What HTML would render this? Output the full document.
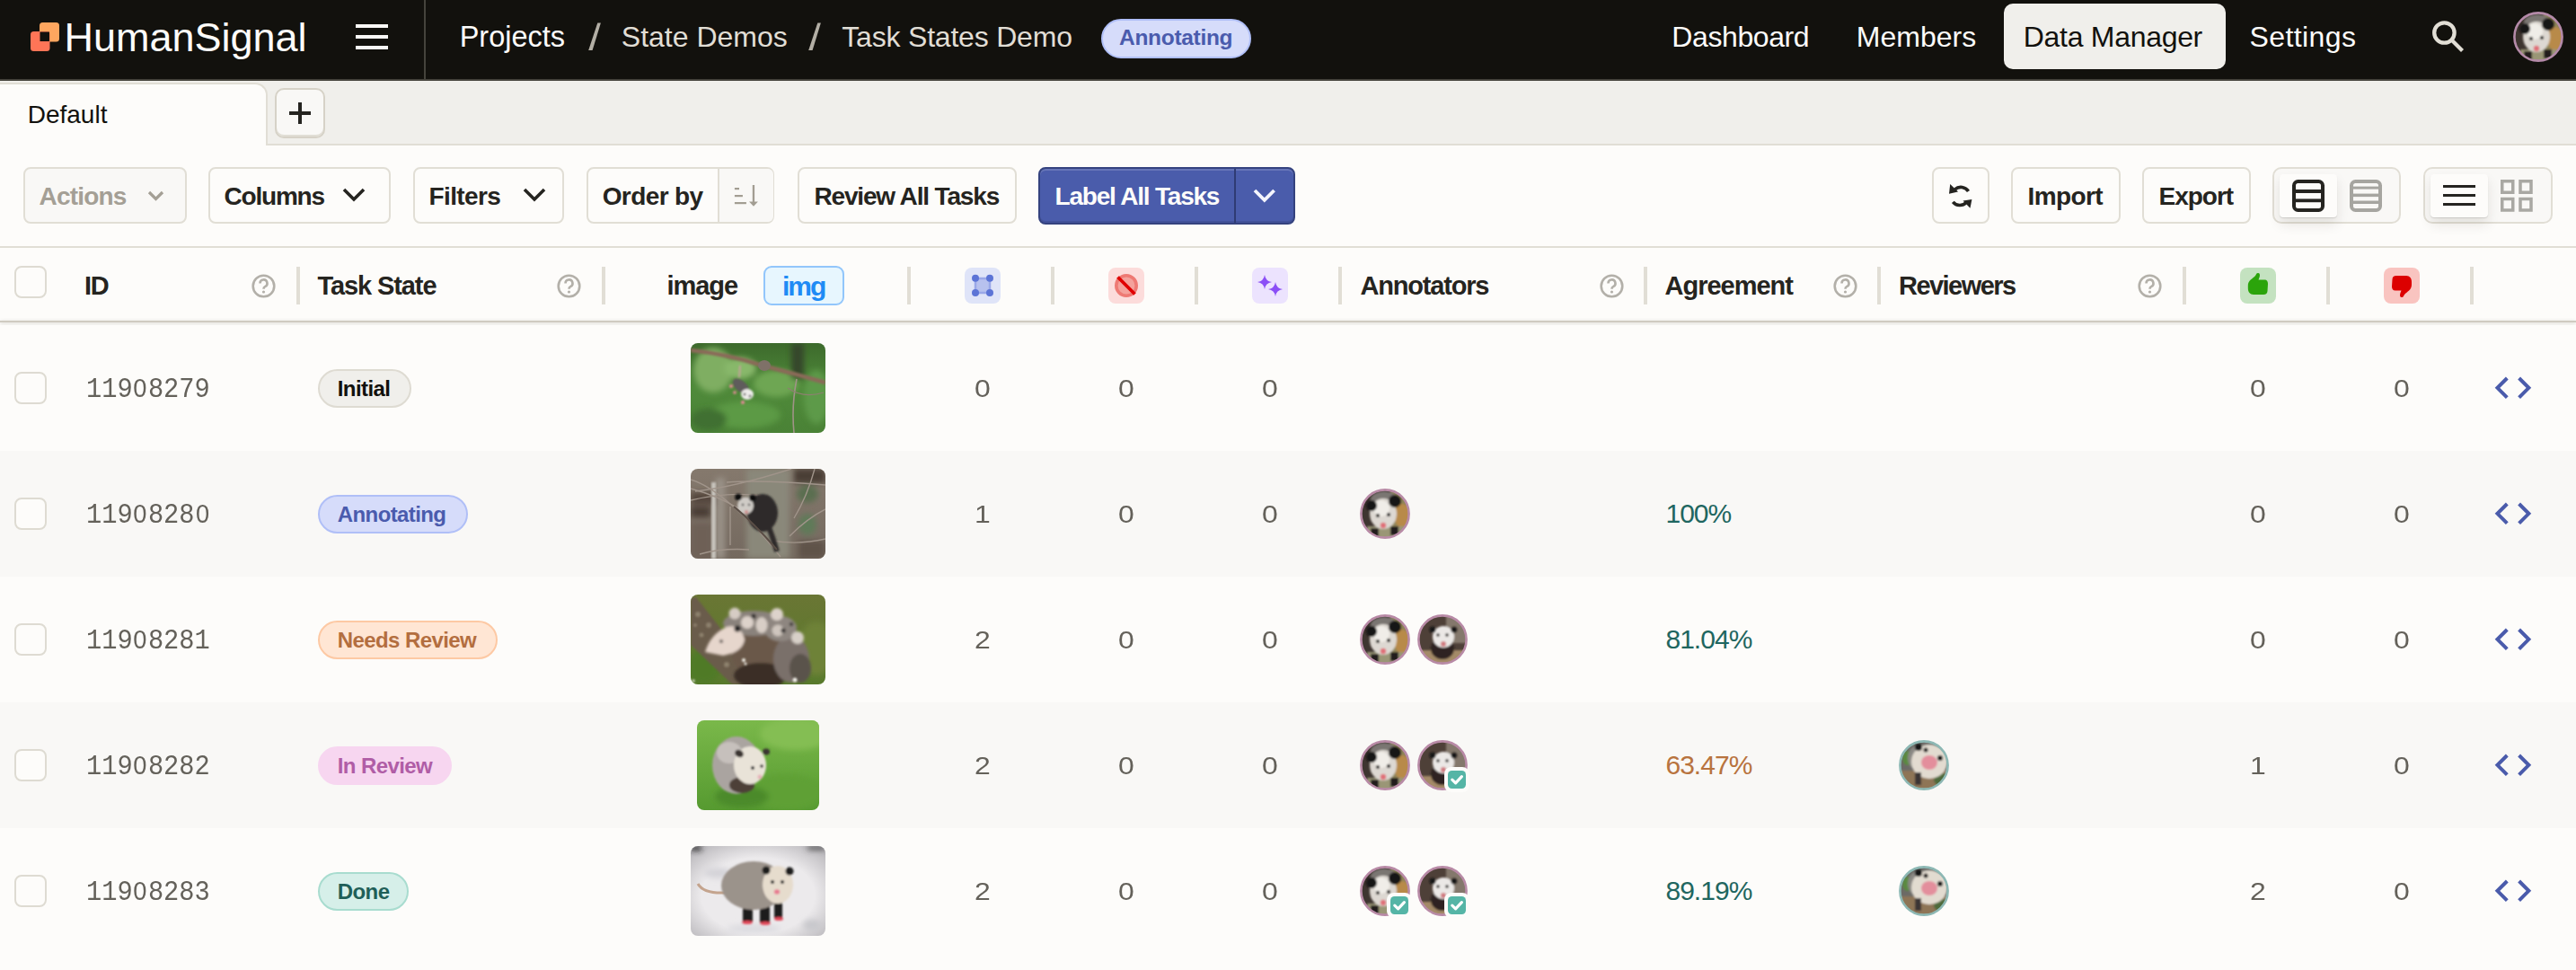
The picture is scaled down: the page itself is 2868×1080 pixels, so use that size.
<!DOCTYPE html>
<html><head><meta charset="utf-8"><title>Data Manager</title>
<style>html,body{margin:0;padding:0;width:2868px;height:1080px;overflow:hidden;background:#fdfcfa;position:relative}
*{font-family:"Liberation Sans", sans-serif}</style></head>
<body>
<div style="position:absolute;left:0px;top:0px;width:2868px;height:88px;background:#12110d"></div>
<div style="position:absolute;left:0px;top:88px;width:2868px;height:2px;background:#45433c"></div>
<svg style="position:absolute;left:33px;top:24px;" width="34" height="34" viewBox="0 0 34 34"><rect x="11" y="1" width="22" height="21.5" rx="3.5" fill="#fea65f"/><rect x="1" y="11" width="21.5" height="22" rx="3.5" fill="#ff7557"/><rect x="11.5" y="11.5" width="10.5" height="10.5" fill="#12110d"/></svg>
<div style="position:absolute;left:71.4px;top:18.8px;font-family:'Liberation Sans', sans-serif;font-size:45px;line-height:45px;font-weight:400;color:#fdfcfa;letter-spacing:0px;white-space:nowrap;">HumanSignal</div>
<div style="position:absolute;left:396px;top:27px;width:36px;height:4px;background:#f9f8f6"></div>
<div style="position:absolute;left:396px;top:39px;width:36px;height:4px;background:#f9f8f6"></div>
<div style="position:absolute;left:396px;top:51px;width:36px;height:4px;background:#f9f8f6"></div>
<div style="position:absolute;left:472px;top:0px;width:2px;height:88px;background:#45433c"></div>
<div style="position:absolute;left:511.7px;top:24.9px;font-family:'Liberation Sans', sans-serif;font-size:32.5px;line-height:32.5px;font-weight:400;color:#fdfcfa;letter-spacing:0px;white-space:nowrap;">Projects</div>
<svg style="position:absolute;left:650px;top:20px;" width="25" height="42" viewBox="0 0 25 42"><polygon points="15.3,5.6 18.9,5.6 9.6,36 5.2,36" fill="#b3afa5"/></svg>
<div style="position:absolute;left:691.8px;top:25.3px;font-family:'Liberation Sans', sans-serif;font-size:32px;line-height:32px;font-weight:400;color:#e1ded5;letter-spacing:0px;white-space:nowrap;">State Demos</div>
<svg style="position:absolute;left:895px;top:20px;" width="25" height="42" viewBox="0 0 25 42"><polygon points="15.3,5.6 18.9,5.6 9.6,36 5.2,36" fill="#b3afa5"/></svg>
<div style="position:absolute;left:937.3px;top:25.3px;font-family:'Liberation Sans', sans-serif;font-size:32px;line-height:32px;font-weight:400;color:#e1ded5;letter-spacing:-0.2px;white-space:nowrap;">Task States Demo</div>
<div style="position:absolute;left:1226px;top:21px;width:167px;height:44px;background:#d6dcfa;border:2px solid #b0bff7;border-radius:22px;box-sizing:border-box"></div>
<div style="position:absolute;left:1246.0px;top:30.2px;font-family:'Liberation Sans', sans-serif;font-size:24.5px;line-height:24.5px;font-weight:700;color:#4a5bad;letter-spacing:-0.3px;white-space:nowrap;">Annotating</div>
<div style="position:absolute;left:1861.3px;top:25.3px;font-family:'Liberation Sans', sans-serif;font-size:32px;line-height:32px;font-weight:400;color:#fdfcfa;letter-spacing:-0.4px;white-space:nowrap;">Dashboard</div>
<div style="position:absolute;left:2066.8px;top:25.3px;font-family:'Liberation Sans', sans-serif;font-size:32px;line-height:32px;font-weight:400;color:#fdfcfa;letter-spacing:0px;white-space:nowrap;">Members</div>
<div style="position:absolute;left:2231px;top:4px;width:247px;height:73px;background:#f0efeb;border-radius:10px"></div>
<div style="position:absolute;left:2252.8px;top:25.3px;font-family:'Liberation Sans', sans-serif;font-size:32px;line-height:32px;font-weight:400;color:#12110d;letter-spacing:-0.3px;white-space:nowrap;">Data Manager</div>
<div style="position:absolute;left:2504.5px;top:25.3px;font-family:'Liberation Sans', sans-serif;font-size:32px;line-height:32px;font-weight:400;color:#fdfcfa;letter-spacing:0.4px;white-space:nowrap;">Settings</div>
<svg style="position:absolute;left:2700px;top:15px;" width="52" height="52" viewBox="0 0 52 52"><circle cx="21.4" cy="21.5" r="11.2" fill="none" stroke="#e1ded5" stroke-width="4.3"/><line x1="30" y1="30" x2="41.5" y2="41.5" stroke="#e1ded5" stroke-width="4.3"/></svg>
<svg style="position:absolute;left:2798px;top:13px;" width="56" height="56" viewBox="0 0 56 56"><defs><clipPath id="ahdrc"><circle cx="28" cy="28" r="26.5"/></clipPath><filter id="ahdrb"><feGaussianBlur stdDeviation="1.2"/></filter></defs><g clip-path="url(#ahdrc)"><rect width="56" height="56" fill="#3e3530"/><g filter="url(#ahdrb)"><rect x="34" y="0" width="22" height="56" fill="#8e8458"/><ellipse cx="47" cy="30" rx="9" ry="13" fill="#b88a48"/><rect x="8" y="42" width="48" height="14" fill="#9a9676"/><ellipse cx="27" cy="12" rx="15" ry="9" fill="#7a7672"/><ellipse cx="26" cy="28" rx="15" ry="17" fill="#ddd8d2"/><ellipse cx="24" cy="22" rx="9" ry="9" fill="#f0ede8"/><circle cx="13" cy="19" r="6" fill="#141212"/><circle cx="39" cy="14" r="7" fill="#141212"/><circle cx="20" cy="30" r="2" fill="#000"/><circle cx="32" cy="29" r="2" fill="#000"/><circle cx="26" cy="41" r="3.2" fill="#e07078"/><rect x="12" y="44" width="9" height="10" fill="#241e1c"/><rect x="34" y="42" width="9" height="10" fill="#241e1c"/></g></g><circle cx="28" cy="28" r="26.6" fill="none" stroke="#b48aa8" stroke-width="2.6"/></svg>
<div style="position:absolute;left:0px;top:90px;width:2868px;height:70px;background:#f0efeb"></div>
<div style="position:absolute;left:0px;top:160px;width:2868px;height:2px;background:#e1ded5"></div>
<div style="position:absolute;left:-2px;top:92px;width:300px;height:70px;background:#fdfcfa;border:2px solid #e1ded5;border-bottom:none;border-top-right-radius:14px;box-sizing:border-box"></div>
<div style="position:absolute;left:30.7px;top:113.7px;font-family:'Liberation Sans', sans-serif;font-size:28px;line-height:28px;font-weight:400;color:#12110d;letter-spacing:0px;white-space:nowrap;">Default</div>
<div style="position:absolute;left:306px;top:98px;width:56px;height:56px;background:#f9f8f6;border:2px solid #d6d2c7;border-radius:10px;box-sizing:border-box;box-shadow:inset 0 -2px 0 #e1ded5"></div>
<div style="position:absolute;left:322px;top:124px;width:24px;height:4px;background:#252420"></div>
<div style="position:absolute;left:332px;top:114px;width:4px;height:24px;background:#252420"></div>
<div style="position:absolute;left:0px;top:162px;width:2868px;height:112px;background:#fdfcfa"></div>
<div style="position:absolute;left:26px;top:186px;width:182px;height:63px;background:#f9f8f6;border:2px solid #e1ded5;border-radius:8px;box-sizing:border-box"></div>
<div style="position:absolute;left:43.5px;top:205.2px;font-family:'Liberation Sans', sans-serif;font-size:28px;line-height:28px;font-weight:700;color:#a49f95;letter-spacing:-0.8px;white-space:nowrap;">Actions</div>
<svg style="position:absolute;left:162.2px;top:210.25px;" width="23" height="15.5" viewBox="0 0 23 15.5"><polyline points="4,4 11.5,11.5 19,4" fill="none" stroke="#a49f95" stroke-width="3.2"/></svg>
<div style="position:absolute;left:232px;top:186px;width:203px;height:63px;background:#fdfcfa;border:2px solid #e1ded5;border-radius:8px;box-sizing:border-box"></div>
<div style="position:absolute;left:249.5px;top:205.2px;font-family:'Liberation Sans', sans-serif;font-size:28px;line-height:28px;font-weight:700;color:#252420;letter-spacing:-1.2px;white-space:nowrap;">Columns</div>
<svg style="position:absolute;left:378.7px;top:207.3px;" width="30" height="19.0" viewBox="0 0 30 19.0"><polyline points="4,4 15.0,15.0 26,4" fill="none" stroke="#252420" stroke-width="3.6"/></svg>
<div style="position:absolute;left:460px;top:186px;width:168px;height:63px;background:#fdfcfa;border:2px solid #e1ded5;border-radius:8px;box-sizing:border-box"></div>
<div style="position:absolute;left:477.5px;top:205.2px;font-family:'Liberation Sans', sans-serif;font-size:28px;line-height:28px;font-weight:700;color:#252420;letter-spacing:-0.6px;white-space:nowrap;">Filters</div>
<svg style="position:absolute;left:580.0px;top:207.3px;" width="30" height="19.0" viewBox="0 0 30 19.0"><polyline points="4,4 15.0,15.0 26,4" fill="none" stroke="#252420" stroke-width="3.6"/></svg>
<div style="position:absolute;left:653px;top:186px;width:209px;height:63px;background:#fdfcfa;border:2px solid #e1ded5;border-radius:8px;box-sizing:border-box"></div>
<div style="position:absolute;left:799px;top:188px;width:62px;height:59px;background:#f9f8f6;border-left:2px solid #e1ded5;border-radius:0 6px 6px 0;box-sizing:border-box"></div>
<div style="position:absolute;left:670.7px;top:205.2px;font-family:'Liberation Sans', sans-serif;font-size:28px;line-height:28px;font-weight:700;color:#252420;letter-spacing:-0.6px;white-space:nowrap;">Order by</div>
<svg style="position:absolute;left:800px;top:190px;" width="56" height="56" viewBox="0 0 56 56"><g fill="#a29d92"><rect x="17.9" y="19" width="5.1" height="2.2"/><rect x="17.9" y="27" width="9" height="2.2"/><rect x="17.9" y="35" width="13" height="2.2"/><rect x="37.8" y="16" width="2.3" height="20"/><polygon points="34,34.4 43.9,34.4 39,39.8"/></g></svg>
<div style="position:absolute;left:888px;top:186px;width:244px;height:63px;background:#fdfcfa;border:2px solid #e1ded5;border-radius:8px;box-sizing:border-box"></div>
<div style="position:absolute;left:906.4px;top:205.2px;font-family:'Liberation Sans', sans-serif;font-size:28px;line-height:28px;font-weight:700;color:#252420;letter-spacing:-1.15px;white-space:nowrap;">Review All Tasks</div>
<div style="position:absolute;left:1156px;top:186px;width:286px;height:63.5px;background:#4a5cab;border:2px solid #34427e;border-radius:8px;box-sizing:border-box;box-shadow:inset 0 2px 0 rgba(255,255,255,0.16),inset 0 -2px 0 rgba(0,0,0,0.10)"></div>
<div style="position:absolute;left:1374px;top:188px;width:2px;height:59.5px;background:#2f3b74"></div>
<div style="position:absolute;left:1174.5px;top:205.2px;font-family:'Liberation Sans', sans-serif;font-size:28px;line-height:28px;font-weight:700;color:#fdfcfa;letter-spacing:-1.2px;white-space:nowrap;">Label All Tasks</div>
<svg style="position:absolute;left:1393.2px;top:208.1px;" width="29.6" height="18.8" viewBox="0 0 29.6 18.8"><polyline points="4,4 14.8,14.8 25.6,4" fill="none" stroke="#f4f5fd" stroke-width="3.8"/></svg>
<div style="position:absolute;left:2151px;top:186px;width:64px;height:63px;background:#fdfcfa;border:2px solid #e1ded5;border-radius:8px;box-sizing:border-box"></div>
<svg style="position:absolute;left:2160px;top:196px;" width="46" height="46" viewBox="0 0 46 46"><g fill="none" stroke="#252420" stroke-width="3.6"><path d="M31.5 17 A10 10 0 0 0 16.5 14.8"/><path d="M14.3 28.8 A10 10 0 0 0 29.2 29.5"/></g><polygon points="11.2,9 10,19.8 20,17.5" fill="#252420"/><polygon points="35.4,26 33.5,35.8 25.5,27.5" fill="#252420"/></svg>
<div style="position:absolute;left:2239px;top:186px;width:122px;height:63px;background:#fdfcfa;border:2px solid #e1ded5;border-radius:8px;box-sizing:border-box"></div>
<div style="position:absolute;left:2257.5px;top:205.2px;font-family:'Liberation Sans', sans-serif;font-size:28px;line-height:28px;font-weight:700;color:#252420;letter-spacing:-0.6px;white-space:nowrap;">Import</div>
<div style="position:absolute;left:2385px;top:186px;width:121px;height:63px;background:#fdfcfa;border:2px solid #e1ded5;border-radius:8px;box-sizing:border-box"></div>
<div style="position:absolute;left:2403.5px;top:205.2px;font-family:'Liberation Sans', sans-serif;font-size:28px;line-height:28px;font-weight:700;color:#252420;letter-spacing:-1.0px;white-space:nowrap;">Export</div>
<div style="position:absolute;left:2530px;top:186px;width:143px;height:63px;background:#f9f8f6;border:2px solid #e1ded5;border-radius:10px;box-sizing:border-box"></div>
<div style="position:absolute;left:2538px;top:194px;width:64px;height:48px;background:#fdfcfa;border-radius:4px;box-shadow:0 1px 1px rgba(0,0,0,0.12),0 8px 14px rgba(40,30,10,0.10)"></div>
<svg style="position:absolute;left:2552px;top:200px;" width="36" height="36" viewBox="0 0 36 36"><rect x="2" y="2" width="32" height="32" rx="4.5" fill="none" stroke="#252420" stroke-width="4"/><rect x="2" y="11" width="32" height="4" fill="#252420"/><rect x="2" y="21.4" width="32" height="3.8" fill="#252420"/></svg>
<svg style="position:absolute;left:2616px;top:200px;" width="36" height="36" viewBox="0 0 36 36"><rect x="2" y="2" width="32" height="32" rx="4.5" fill="none" stroke="#a6a5a0" stroke-width="4"/><rect x="2" y="7.6" width="32" height="3" fill="#a6a5a0"/><rect x="2" y="15.6" width="32" height="3.5" fill="#a6a5a0"/><rect x="2" y="23.5" width="32" height="3.5" fill="#a6a5a0"/></svg>
<div style="position:absolute;left:2698px;top:186px;width:144px;height:63px;background:#f9f8f6;border:2px solid #e1ded5;border-radius:10px;box-sizing:border-box"></div>
<div style="position:absolute;left:2706px;top:194px;width:64px;height:48px;background:#fdfcfa;border-radius:4px;box-shadow:0 1px 1px rgba(0,0,0,0.12),0 8px 14px rgba(40,30,10,0.10)"></div>
<div style="position:absolute;left:2720px;top:206px;width:36px;height:3.2px;background:#252420"></div>
<div style="position:absolute;left:2720px;top:216px;width:36px;height:3.2px;background:#252420"></div>
<div style="position:absolute;left:2720px;top:226px;width:36px;height:3.2px;background:#252420"></div>
<svg style="position:absolute;left:2784px;top:200px;" width="36" height="36" viewBox="0 0 36 36"><g fill="none" stroke="#a9a8a3" stroke-width="3.5"><rect x="1.75" y="1.75" width="12" height="12.5"/><rect x="22" y="1.75" width="12" height="12.5"/><rect x="1.75" y="21.5" width="12" height="12.5"/><rect x="22" y="21.5" width="12" height="12.5"/></g></svg>
<div style="position:absolute;left:0px;top:274px;width:2868px;height:2px;background:#e1ded5"></div>
<div style="position:absolute;left:0px;top:276px;width:2868px;height:82px;background:#fdfcfa"></div>
<div style="position:absolute;left:0px;top:357px;width:2868px;height:1.5px;background:#cfcbc1;box-shadow:0 1px 4px rgba(40,30,10,0.22)"></div>
<div style="position:absolute;left:16px;top:296px;width:36px;height:36px;border:2px solid #dedbd2;border-radius:8px;box-sizing:border-box;background:#fdfcfa"></div>
<div style="position:absolute;left:93.9px;top:304.4px;font-family:'Liberation Sans', sans-serif;font-size:29px;line-height:29px;font-weight:700;color:#252420;letter-spacing:-1.2px;white-space:nowrap;">ID</div>
<svg style="position:absolute;left:280px;top:305px;" width="27" height="27" viewBox="0 0 27 27"><circle cx="13.5" cy="13.5" r="11.8" fill="none" stroke="#b3b0a9" stroke-width="2.6"/><path d="M9.5 10.5 a4 4 0 1 1 5.6 3.6 c-1.2 0.6 -1.6 1.3 -1.6 2.6" fill="none" stroke="#b3b0a9" stroke-width="2.6"/><circle cx="13.5" cy="20" r="1.6" fill="#b3b0a9"/></svg>
<div style="position:absolute;left:330px;top:297px;width:4px;height:42px;background:#e1ded5"></div>
<div style="position:absolute;left:353.5px;top:304.4px;font-family:'Liberation Sans', sans-serif;font-size:29px;line-height:29px;font-weight:700;color:#252420;letter-spacing:-1.1px;white-space:nowrap;">Task State</div>
<svg style="position:absolute;left:620px;top:305px;" width="27" height="27" viewBox="0 0 27 27"><circle cx="13.5" cy="13.5" r="11.8" fill="none" stroke="#b3b0a9" stroke-width="2.6"/><path d="M9.5 10.5 a4 4 0 1 1 5.6 3.6 c-1.2 0.6 -1.6 1.3 -1.6 2.6" fill="none" stroke="#b3b0a9" stroke-width="2.6"/><circle cx="13.5" cy="20" r="1.6" fill="#b3b0a9"/></svg>
<div style="position:absolute;left:670px;top:297px;width:4px;height:42px;background:#e1ded5"></div>
<div style="position:absolute;left:742.5px;top:304.4px;font-family:'Liberation Sans', sans-serif;font-size:29px;line-height:29px;font-weight:700;color:#252420;letter-spacing:-1.05px;white-space:nowrap;">image</div>
<div style="position:absolute;left:850px;top:296px;width:90px;height:43.5px;background:#e7f6fe;border:2px solid #92c6fb;border-radius:9px;box-sizing:border-box"></div>
<div style="position:absolute;left:870.9px;top:303.5px;font-family:'Liberation Sans', sans-serif;font-size:30px;line-height:30px;font-weight:700;color:#1f8bf5;letter-spacing:-2.0px;white-space:nowrap;">img</div>
<div style="position:absolute;left:1010px;top:297px;width:4px;height:42px;background:#e1ded5"></div>
<svg style="position:absolute;left:1074px;top:298px;" width="40" height="40" viewBox="0 0 40 40"><rect width="40" height="40" rx="8" fill="#dfe4f8"/><rect x="12" y="12" width="16" height="16" fill="#b7c1ee" stroke="#9aa8e8" stroke-width="2.5"/><g fill="#5c74d6"><circle cx="12" cy="11.7" r="4"/><circle cx="28" cy="11.7" r="4"/><circle cx="12" cy="28" r="4"/><circle cx="28" cy="28" r="4"/></g></svg>
<div style="position:absolute;left:1170px;top:297px;width:4px;height:42px;background:#e1ded5"></div>
<svg style="position:absolute;left:1234px;top:298px;" width="40" height="40" viewBox="0 0 40 40"><rect width="40" height="40" rx="8" fill="#fcdcdb"/><circle cx="20" cy="20" r="11.2" fill="#f4a29c" stroke="#ee7a74" stroke-width="3.6"/><line x1="10.5" y1="10.5" x2="29.5" y2="29.5" stroke="#e00000" stroke-width="3.8"/></svg>
<div style="position:absolute;left:1330px;top:297px;width:4px;height:42px;background:#e1ded5"></div>
<svg style="position:absolute;left:1394px;top:298px;" width="40" height="40" viewBox="0 0 40 40"><rect width="40" height="40" rx="8" fill="#ece3fe"/><path d="M14 8 Q15 15 22 16 Q15 17 14 24 Q13 17 6 16 Q13 15 14 8Z" fill="#8b4ff6"/><path d="M26 16 Q27 23 34 24 Q27 25 26 32 Q25 25 18 24 Q25 23 26 16Z" fill="#8b4ff6"/></svg>
<div style="position:absolute;left:1490px;top:297px;width:4px;height:42px;background:#e1ded5"></div>
<div style="position:absolute;left:1514.5px;top:304.4px;font-family:'Liberation Sans', sans-serif;font-size:29px;line-height:29px;font-weight:700;color:#252420;letter-spacing:-1.2px;white-space:nowrap;">Annotators</div>
<svg style="position:absolute;left:1781px;top:305px;" width="27" height="27" viewBox="0 0 27 27"><circle cx="13.5" cy="13.5" r="11.8" fill="none" stroke="#b3b0a9" stroke-width="2.6"/><path d="M9.5 10.5 a4 4 0 1 1 5.6 3.6 c-1.2 0.6 -1.6 1.3 -1.6 2.6" fill="none" stroke="#b3b0a9" stroke-width="2.6"/><circle cx="13.5" cy="20" r="1.6" fill="#b3b0a9"/></svg>
<div style="position:absolute;left:1830px;top:297px;width:4px;height:42px;background:#e1ded5"></div>
<div style="position:absolute;left:1853.5px;top:304.4px;font-family:'Liberation Sans', sans-serif;font-size:29px;line-height:29px;font-weight:700;color:#252420;letter-spacing:-1.0px;white-space:nowrap;">Agreement</div>
<svg style="position:absolute;left:2040.7px;top:305px;" width="27" height="27" viewBox="0 0 27 27"><circle cx="13.5" cy="13.5" r="11.8" fill="none" stroke="#b3b0a9" stroke-width="2.6"/><path d="M9.5 10.5 a4 4 0 1 1 5.6 3.6 c-1.2 0.6 -1.6 1.3 -1.6 2.6" fill="none" stroke="#b3b0a9" stroke-width="2.6"/><circle cx="13.5" cy="20" r="1.6" fill="#b3b0a9"/></svg>
<div style="position:absolute;left:2090px;top:297px;width:4px;height:42px;background:#e1ded5"></div>
<div style="position:absolute;left:2114.0px;top:304.4px;font-family:'Liberation Sans', sans-serif;font-size:29px;line-height:29px;font-weight:700;color:#252420;letter-spacing:-1.55px;white-space:nowrap;">Reviewers</div>
<svg style="position:absolute;left:2380.4px;top:305px;" width="27" height="27" viewBox="0 0 27 27"><circle cx="13.5" cy="13.5" r="11.8" fill="none" stroke="#b3b0a9" stroke-width="2.6"/><path d="M9.5 10.5 a4 4 0 1 1 5.6 3.6 c-1.2 0.6 -1.6 1.3 -1.6 2.6" fill="none" stroke="#b3b0a9" stroke-width="2.6"/><circle cx="13.5" cy="20" r="1.6" fill="#b3b0a9"/></svg>
<div style="position:absolute;left:2430px;top:297px;width:4px;height:42px;background:#e1ded5"></div>
<svg style="position:absolute;left:2494px;top:298px;" width="40" height="40" viewBox="0 0 40 40"><rect width="40" height="40" rx="8" fill="#c4e2c0"/><path d="M8.8 20 C8.8 14 14 12.5 17 9 C18 7.5 18 6 20 6 C22 6 22.5 8 21.5 11 L20.5 13.5 L27 13.5 C30 13.5 31 15.5 31 18 L30.5 26 C30.3 28.5 29 30 26 30 L15 30 C11 30 8.8 27 8.8 23Z" fill="#2ba40b"/></svg>
<div style="position:absolute;left:2590px;top:297px;width:4px;height:42px;background:#e1ded5"></div>
<svg style="position:absolute;left:2654px;top:298px;" width="40" height="40" viewBox="0 0 40 40"><rect width="40" height="40" rx="8" fill="#f9c4c0"/><path d="M31 19 C31 25 26 26.5 23 30 C22 31.5 22 33 20 33 C18 33 17.5 31 18.5 28 L19.5 25.5 L13 25.5 C10 25.5 9 23.5 9 21 L9.5 13 C9.7 10.5 11 9 14 9 L25 9 C29 9 31 12 31 16Z" fill="#dc0000"/></svg>
<div style="position:absolute;left:2750px;top:297px;width:4px;height:42px;background:#e1ded5"></div>
<div style="position:absolute;left:0px;top:362px;width:2868px;height:140px;background:#fdfcfa"></div>
<div style="position:absolute;left:16px;top:414px;width:36px;height:36px;border:2px solid #dedbd2;border-radius:8px;box-sizing:border-box;background:#fdfcfa"></div>
<div style="position:absolute;left:95.5px;top:419.2px;font-family:'Liberation Mono', monospace;font-size:28px;line-height:28px;font-weight:400;color:#64615a;letter-spacing:0px;white-space:nowrap;transform:scale(1.025,1.12);transform-origin:0 21.3px">119<span style="display:inline-block;width:0.6em;text-align:center;font-family:'Liberation Sans';transform:scale(0.95,0.93);transform-origin:50% 80%">0</span>8279</div>
<div style="position:absolute;left:354px;top:410.5px;width:103.69999999999999px;height:43.5px;background:#f0efeb;border:2px solid #dedbd2;border-radius:22px;box-sizing:border-box"></div>
<div style="position:absolute;left:375.8px;top:421.1px;font-family:'Liberation Sans', sans-serif;font-size:24px;line-height:24px;font-weight:700;color:#12110d;letter-spacing:-0.6px;white-space:nowrap;">Initial</div>
<svg style="position:absolute;left:769px;top:382px;" width="150" height="100" viewBox="0 0 150 100"><defs><clipPath id="p0c"><rect width="150" height="100" rx="8"/></clipPath><filter id="p0b" x="-20%" y="-20%" width="140%" height="140%"><feGaussianBlur stdDeviation="3"/></filter><filter id="p0s" x="-20%" y="-20%" width="140%" height="140%"><feGaussianBlur stdDeviation="0.8"/></filter><linearGradient id="p0g" x1="0" y1="0" x2="0" y2="1"><stop offset="0" stop-color="#3d6a2c"/><stop offset="0.5" stop-color="#4f8a3a"/><stop offset="1" stop-color="#4a8236"/></linearGradient></defs><g clip-path="url(#p0c)"><rect width="150" height="100" fill="url(#p0g)"/><g filter="url(#p0b)"><ellipse cx="25" cy="30" rx="22" ry="25" fill="#7fae62"/><ellipse cx="55" cy="28" rx="18" ry="12" fill="#88b86a"/><ellipse cx="95" cy="45" rx="25" ry="15" fill="#6ea652"/><ellipse cx="60" cy="80" rx="40" ry="15" fill="#5c9a44"/><rect x="112" y="0" width="14" height="40" fill="#34472a"/><ellipse cx="140" cy="60" rx="14" ry="30" fill="#5d9a48"/><ellipse cx="20" cy="85" rx="20" ry="12" fill="#3f7030"/></g><path d="M0 8 Q40 12 80 25 Q115 34 150 44" fill="none" stroke="#8a6a58" stroke-width="4.5" filter="url(#p0s)"/><ellipse cx="82" cy="25" rx="7" ry="6" fill="#7f7168"/><path d="M118 40 Q112 70 115 100" fill="none" stroke="#9f9386" stroke-width="1.6"/><path d="M108 50 Q125 62 148 55" fill="none" stroke="#8d8070" stroke-width="1.2"/><g filter="url(#p0s)"><line x1="55" y1="25" x2="54" y2="38" stroke="#c4a39a" stroke-width="2"/><ellipse cx="56" cy="48" rx="11" ry="6" transform="rotate(40 56 48)" fill="#5f5b5b"/><ellipse cx="63" cy="57" rx="7" ry="6" fill="#eeedeb"/><circle cx="60" cy="57" r="1.3" fill="#111"/><circle cx="66" cy="59" r="1.3" fill="#111"/><circle cx="45" cy="48" r="2" fill="#e98a9a"/><circle cx="49" cy="55" r="1.8" fill="#e98a9a"/><circle cx="58" cy="66" r="2" fill="#e98a9a"/></g></g></svg>
<div style="position:absolute;left:1043.9px;top:418.3px;width:100px;text-align:center;font-family:'Liberation Sans', sans-serif;font-size:28.5px;line-height:28.5px;font-weight:400;color:#64615a;letter-spacing:0px;white-space:nowrap;transform:scaleX(1.12);transform-origin:50px 0">0</div>
<div style="position:absolute;left:1203.8px;top:418.3px;width:100px;text-align:center;font-family:'Liberation Sans', sans-serif;font-size:28.5px;line-height:28.5px;font-weight:400;color:#64615a;letter-spacing:0px;white-space:nowrap;transform:scaleX(1.12);transform-origin:50px 0">0</div>
<div style="position:absolute;left:1363.8px;top:418.3px;width:100px;text-align:center;font-family:'Liberation Sans', sans-serif;font-size:28.5px;line-height:28.5px;font-weight:400;color:#64615a;letter-spacing:0px;white-space:nowrap;transform:scaleX(1.12);transform-origin:50px 0">0</div>
<div style="position:absolute;left:2463.8px;top:418.3px;width:100px;text-align:center;font-family:'Liberation Sans', sans-serif;font-size:28.5px;line-height:28.5px;font-weight:400;color:#64615a;letter-spacing:0px;white-space:nowrap;transform:scaleX(1.12);transform-origin:50px 0">0</div>
<div style="position:absolute;left:2624.0px;top:418.3px;width:100px;text-align:center;font-family:'Liberation Sans', sans-serif;font-size:28.5px;line-height:28.5px;font-weight:400;color:#64615a;letter-spacing:0px;white-space:nowrap;transform:scaleX(1.12);transform-origin:50px 0">0</div>
<svg style="position:absolute;left:2776px;top:419px;" width="44" height="26" viewBox="0 0 44 26"><polyline points="15.3,2 4.5,12.8 15.3,23.6" fill="none" stroke="#4a5bab" stroke-width="4"/><polyline points="28.6,2 39.4,12.8 28.6,23.6" fill="none" stroke="#4a5bab" stroke-width="4"/></svg>
<div style="position:absolute;left:0px;top:502px;width:2868px;height:140px;background:#f9f8f6"></div>
<div style="position:absolute;left:16px;top:554px;width:36px;height:36px;border:2px solid #dedbd2;border-radius:8px;box-sizing:border-box;background:#fdfcfa"></div>
<div style="position:absolute;left:95.5px;top:559.2px;font-family:'Liberation Mono', monospace;font-size:28px;line-height:28px;font-weight:400;color:#64615a;letter-spacing:0px;white-space:nowrap;transform:scale(1.025,1.12);transform-origin:0 21.3px">119<span style="display:inline-block;width:0.6em;text-align:center;font-family:'Liberation Sans';transform:scale(0.95,0.93);transform-origin:50% 80%">0</span>828<span style="display:inline-block;width:0.6em;text-align:center;font-family:'Liberation Sans';transform:scale(0.95,0.93);transform-origin:50% 80%">0</span></div>
<div style="position:absolute;left:354px;top:550.5px;width:166.70000000000005px;height:43.5px;background:#d6dcfa;border:2px solid #b0bff7;border-radius:22px;box-sizing:border-box"></div>
<div style="position:absolute;left:375.8px;top:561.1px;font-family:'Liberation Sans', sans-serif;font-size:24px;line-height:24px;font-weight:700;color:#4a5bad;letter-spacing:-0.6px;white-space:nowrap;">Annotating</div>
<svg style="position:absolute;left:769px;top:522px;" width="150" height="100" viewBox="0 0 150 100"><defs><clipPath id="p1c"><rect width="150" height="100" rx="8"/></clipPath><filter id="p1b" x="-20%" y="-20%" width="140%" height="140%"><feGaussianBlur stdDeviation="3"/></filter><filter id="p1s" x="-20%" y="-20%" width="140%" height="140%"><feGaussianBlur stdDeviation="0.8"/></filter><linearGradient id="p1g" x1="0" y1="0" x2="0" y2="1"><stop offset="0" stop-color="#85796d"/><stop offset="1" stop-color="#74695f"/></linearGradient></defs><g clip-path="url(#p1c)"><rect width="150" height="100" fill="url(#p1g)"/><g filter="url(#p1b)"><rect x="0" y="26" width="30" height="14" fill="#54473d"/><rect x="0" y="42" width="22" height="12" fill="#4a3e36"/><rect x="0" y="60" width="25" height="40" fill="#6e6056"/><rect x="62" y="0" width="48" height="100" fill="#8a887a"/><rect x="115" y="0" width="35" height="16" fill="#4a3e34"/><ellipse cx="130" cy="28" rx="12" ry="10" fill="#5a6e50"/><ellipse cx="130" cy="62" rx="10" ry="12" fill="#5e7a58"/><rect x="120" y="80" width="30" height="20" fill="#5e534a"/><rect x="28" y="10" width="10" height="90" fill="#9a9288"/></g><rect x="23" y="15" width="5" height="85" fill="#c6c2bb" filter="url(#p1s)"/><g fill="none" stroke="#a0948a" stroke-width="1.4"><path d="M0 12 Q20 18 45 40 Q70 60 100 98"/><path d="M0 22 Q30 30 55 45"/><path d="M5 25 Q50 20 112 0"/><path d="M40 15 Q80 12 150 18"/><path d="M0 35 Q40 25 80 30"/><path d="M110 75 Q130 55 150 45"/><path d="M115 55 Q130 30 138 0"/><path d="M90 80 Q120 85 150 78"/><path d="M44 42 L44 85"/><path d="M10 95 Q35 88 65 90"/></g><g filter="url(#p1s)"><ellipse cx="80" cy="49" rx="17" ry="21" fill="#2e2c2c"/><path d="M86 62 Q92 78 96 92" stroke="#2e2c2c" stroke-width="6" fill="none"/><ellipse cx="61" cy="41" rx="9" ry="9.5" fill="#cfcbc6"/><circle cx="53" cy="31.5" r="3.8" fill="#111"/><circle cx="69" cy="32.5" r="3.8" fill="#111"/><circle cx="58" cy="40" r="1.2" fill="#222"/><circle cx="65" cy="40" r="1.2" fill="#222"/><circle cx="62" cy="48" r="2" fill="#d08a8a"/></g><path d="M48 42 Q70 60 96 90" fill="none" stroke="#5a4e46" stroke-width="2.2"/></g></svg>
<div style="position:absolute;left:1043.9px;top:558.3px;width:100px;text-align:center;font-family:'Liberation Sans', sans-serif;font-size:28.5px;line-height:28.5px;font-weight:400;color:#64615a;letter-spacing:0px;white-space:nowrap;transform:scaleX(1.12);transform-origin:50px 0">1</div>
<div style="position:absolute;left:1203.8px;top:558.3px;width:100px;text-align:center;font-family:'Liberation Sans', sans-serif;font-size:28.5px;line-height:28.5px;font-weight:400;color:#64615a;letter-spacing:0px;white-space:nowrap;transform:scaleX(1.12);transform-origin:50px 0">0</div>
<div style="position:absolute;left:1363.8px;top:558.3px;width:100px;text-align:center;font-family:'Liberation Sans', sans-serif;font-size:28.5px;line-height:28.5px;font-weight:400;color:#64615a;letter-spacing:0px;white-space:nowrap;transform:scaleX(1.12);transform-origin:50px 0">0</div>
<svg style="position:absolute;left:1514px;top:544px;" width="56" height="56" viewBox="0 0 56 56"><defs><clipPath id="a1_0c"><circle cx="28" cy="28" r="26.5"/></clipPath><filter id="a1_0b"><feGaussianBlur stdDeviation="1.2"/></filter></defs><g clip-path="url(#a1_0c)"><rect width="56" height="56" fill="#3e3530"/><g filter="url(#a1_0b)"><rect x="34" y="0" width="22" height="56" fill="#8e8458"/><ellipse cx="47" cy="30" rx="9" ry="13" fill="#b88a48"/><rect x="8" y="42" width="48" height="14" fill="#9a9676"/><ellipse cx="27" cy="12" rx="15" ry="9" fill="#7a7672"/><ellipse cx="26" cy="28" rx="15" ry="17" fill="#ddd8d2"/><ellipse cx="24" cy="22" rx="9" ry="9" fill="#f0ede8"/><circle cx="13" cy="19" r="6" fill="#141212"/><circle cx="39" cy="14" r="7" fill="#141212"/><circle cx="20" cy="30" r="2" fill="#000"/><circle cx="32" cy="29" r="2" fill="#000"/><circle cx="26" cy="41" r="3.2" fill="#e07078"/><rect x="12" y="44" width="9" height="10" fill="#241e1c"/><rect x="34" y="42" width="9" height="10" fill="#241e1c"/></g></g><circle cx="28" cy="28" r="26.6" fill="none" stroke="#b88aa6" stroke-width="2.6"/></svg>
<div style="position:absolute;left:1854.4px;top:557.0px;font-family:'Liberation Sans', sans-serif;font-size:30px;line-height:30px;font-weight:400;color:#1f6660;letter-spacing:-0.95px;white-space:nowrap;">100%</div>
<div style="position:absolute;left:2463.8px;top:558.3px;width:100px;text-align:center;font-family:'Liberation Sans', sans-serif;font-size:28.5px;line-height:28.5px;font-weight:400;color:#64615a;letter-spacing:0px;white-space:nowrap;transform:scaleX(1.12);transform-origin:50px 0">0</div>
<div style="position:absolute;left:2624.0px;top:558.3px;width:100px;text-align:center;font-family:'Liberation Sans', sans-serif;font-size:28.5px;line-height:28.5px;font-weight:400;color:#64615a;letter-spacing:0px;white-space:nowrap;transform:scaleX(1.12);transform-origin:50px 0">0</div>
<svg style="position:absolute;left:2776px;top:559px;" width="44" height="26" viewBox="0 0 44 26"><polyline points="15.3,2 4.5,12.8 15.3,23.6" fill="none" stroke="#4a5bab" stroke-width="4"/><polyline points="28.6,2 39.4,12.8 28.6,23.6" fill="none" stroke="#4a5bab" stroke-width="4"/></svg>
<div style="position:absolute;left:0px;top:642px;width:2868px;height:140px;background:#fdfcfa"></div>
<div style="position:absolute;left:16px;top:694px;width:36px;height:36px;border:2px solid #dedbd2;border-radius:8px;box-sizing:border-box;background:#fdfcfa"></div>
<div style="position:absolute;left:95.5px;top:699.2px;font-family:'Liberation Mono', monospace;font-size:28px;line-height:28px;font-weight:400;color:#64615a;letter-spacing:0px;white-space:nowrap;transform:scale(1.025,1.12);transform-origin:0 21.3px">119<span style="display:inline-block;width:0.6em;text-align:center;font-family:'Liberation Sans';transform:scale(0.95,0.93);transform-origin:50% 80%">0</span>8281</div>
<div style="position:absolute;left:354px;top:690.5px;width:199.79999999999995px;height:43.5px;background:#ffe6d4;border:2px solid #fdc9a4;border-radius:22px;box-sizing:border-box"></div>
<div style="position:absolute;left:375.8px;top:701.1px;font-family:'Liberation Sans', sans-serif;font-size:24px;line-height:24px;font-weight:700;color:#b36e3f;letter-spacing:-0.6px;white-space:nowrap;">Needs Review</div>
<svg style="position:absolute;left:769px;top:662px;" width="150" height="100" viewBox="0 0 150 100"><defs><clipPath id="p2c"><rect width="150" height="100" rx="8"/></clipPath><filter id="p2b" x="-20%" y="-20%" width="140%" height="140%"><feGaussianBlur stdDeviation="3"/></filter><filter id="p2s" x="-20%" y="-20%" width="140%" height="140%"><feGaussianBlur stdDeviation="0.8"/></filter><linearGradient id="p2g" x1="0" y1="0" x2="0" y2="1"><stop offset="0" stop-color="#6a7634"/><stop offset="1" stop-color="#587a2c"/></linearGradient><filter id="p2m" x="-20%" y="-20%" width="140%" height="140%"><feGaussianBlur stdDeviation="1.4"/></filter></defs><g clip-path="url(#p2c)"><rect width="150" height="100" fill="url(#p2g)"/><g filter="url(#p2b)"><ellipse cx="140" cy="60" rx="20" ry="30" fill="#6e8238"/><ellipse cx="15" cy="80" rx="18" ry="20" fill="#507a28"/></g><polygon points="0,4 6,3 32,36 62,76 76,100 46,100 0,56" fill="#6a5c4c" filter="url(#p2s)"/><g filter="url(#p2s)" fill="#8c806c"><circle cx="8" cy="22" r="3"/><circle cx="20" cy="34" r="3"/><circle cx="12" cy="45" r="2.5"/><circle cx="40" cy="78" r="3"/><circle cx="5" cy="34" r="2"/><circle cx="25" cy="60" r="2"/></g><g filter="url(#p2m)"><ellipse cx="88" cy="66" rx="42" ry="30" fill="#6a5848"/><ellipse cx="78" cy="90" rx="30" ry="14" fill="#3a2e26"/><ellipse cx="112" cy="72" rx="20" ry="26" fill="#7a706a"/><ellipse cx="122" cy="82" rx="12" ry="16" fill="#5a524c"/><ellipse cx="70" cy="32" rx="34" ry="14" fill="#8a827c"/><ellipse cx="100" cy="38" rx="18" ry="14" fill="#8e8680"/><path d="M16 64 Q22 44 40 36 Q55 32 60 50 Q58 64 36 68 Z" fill="#e6d6cc"/><circle cx="49" cy="21" r="6.5" fill="#d6ccc4"/><circle cx="63" cy="31" r="7" fill="#ddd2ca"/><ellipse cx="79" cy="34" rx="6.5" ry="9" fill="#d8cec6"/><circle cx="96" cy="22" r="7" fill="#ddd3cb"/><circle cx="97" cy="40" r="6.5" fill="#cfc6be"/><circle cx="119" cy="48" r="7" fill="#d8d0c8"/><circle cx="52" cy="38" r="3.5" fill="#1e1a1a"/><circle cx="70" cy="24" r="2.5" fill="#1e1a1a"/><circle cx="103" cy="40" r="2.5" fill="#1e1a1a"/><circle cx="112" cy="33" r="2" fill="#1e1a1a"/><circle cx="34" cy="52" r="1.8" fill="#111"/></g><g fill="#f2f0e8" filter="url(#p2s)"><circle cx="59" cy="73" r="2"/><circle cx="61" cy="77" r="1.5"/><circle cx="116" cy="95" r="2.5"/><circle cx="3" cy="96" r="1.5"/></g></g></svg>
<div style="position:absolute;left:1043.9px;top:698.3px;width:100px;text-align:center;font-family:'Liberation Sans', sans-serif;font-size:28.5px;line-height:28.5px;font-weight:400;color:#64615a;letter-spacing:0px;white-space:nowrap;transform:scaleX(1.12);transform-origin:50px 0">2</div>
<div style="position:absolute;left:1203.8px;top:698.3px;width:100px;text-align:center;font-family:'Liberation Sans', sans-serif;font-size:28.5px;line-height:28.5px;font-weight:400;color:#64615a;letter-spacing:0px;white-space:nowrap;transform:scaleX(1.12);transform-origin:50px 0">0</div>
<div style="position:absolute;left:1363.8px;top:698.3px;width:100px;text-align:center;font-family:'Liberation Sans', sans-serif;font-size:28.5px;line-height:28.5px;font-weight:400;color:#64615a;letter-spacing:0px;white-space:nowrap;transform:scaleX(1.12);transform-origin:50px 0">0</div>
<svg style="position:absolute;left:1514px;top:684px;" width="56" height="56" viewBox="0 0 56 56"><defs><clipPath id="a2_0c"><circle cx="28" cy="28" r="26.5"/></clipPath><filter id="a2_0b"><feGaussianBlur stdDeviation="1.2"/></filter></defs><g clip-path="url(#a2_0c)"><rect width="56" height="56" fill="#3e3530"/><g filter="url(#a2_0b)"><rect x="34" y="0" width="22" height="56" fill="#8e8458"/><ellipse cx="47" cy="30" rx="9" ry="13" fill="#b88a48"/><rect x="8" y="42" width="48" height="14" fill="#9a9676"/><ellipse cx="27" cy="12" rx="15" ry="9" fill="#7a7672"/><ellipse cx="26" cy="28" rx="15" ry="17" fill="#ddd8d2"/><ellipse cx="24" cy="22" rx="9" ry="9" fill="#f0ede8"/><circle cx="13" cy="19" r="6" fill="#141212"/><circle cx="39" cy="14" r="7" fill="#141212"/><circle cx="20" cy="30" r="2" fill="#000"/><circle cx="32" cy="29" r="2" fill="#000"/><circle cx="26" cy="41" r="3.2" fill="#e07078"/><rect x="12" y="44" width="9" height="10" fill="#241e1c"/><rect x="34" y="42" width="9" height="10" fill="#241e1c"/></g></g><circle cx="28" cy="28" r="26.6" fill="none" stroke="#b88aa6" stroke-width="2.6"/></svg>
<svg style="position:absolute;left:1578px;top:684px;" width="56" height="56" viewBox="0 0 56 56"><defs><clipPath id="a2_1c"><circle cx="28" cy="28" r="26.5"/></clipPath><filter id="a2_1b"><feGaussianBlur stdDeviation="1.2"/></filter></defs><g clip-path="url(#a2_1c)"><rect width="56" height="56" fill="#4e4038"/><g filter="url(#a2_1b)"><rect x="32" y="0" width="24" height="32" fill="#84786c"/><rect x="0" y="40" width="56" height="16" fill="#a48a68"/><ellipse cx="28" cy="38" rx="13" ry="12" fill="#2e2420"/><ellipse cx="29" cy="25" rx="12" ry="12" fill="#ebe8e6"/><circle cx="17" cy="17" r="3.5" fill="#151212"/><circle cx="41" cy="17" r="3.5" fill="#151212"/><circle cx="23" cy="23" r="1.7" fill="#000"/><circle cx="33" cy="23" r="1.7" fill="#000"/><circle cx="29" cy="33" r="3" fill="#d07a80"/></g></g><circle cx="28" cy="28" r="26.6" fill="none" stroke="#b88aa6" stroke-width="2.6"/></svg>
<div style="position:absolute;left:1854.4px;top:697.0px;font-family:'Liberation Sans', sans-serif;font-size:30px;line-height:30px;font-weight:400;color:#1f6660;letter-spacing:-0.95px;white-space:nowrap;">81.04%</div>
<div style="position:absolute;left:2463.8px;top:698.3px;width:100px;text-align:center;font-family:'Liberation Sans', sans-serif;font-size:28.5px;line-height:28.5px;font-weight:400;color:#64615a;letter-spacing:0px;white-space:nowrap;transform:scaleX(1.12);transform-origin:50px 0">0</div>
<div style="position:absolute;left:2624.0px;top:698.3px;width:100px;text-align:center;font-family:'Liberation Sans', sans-serif;font-size:28.5px;line-height:28.5px;font-weight:400;color:#64615a;letter-spacing:0px;white-space:nowrap;transform:scaleX(1.12);transform-origin:50px 0">0</div>
<svg style="position:absolute;left:2776px;top:699px;" width="44" height="26" viewBox="0 0 44 26"><polyline points="15.3,2 4.5,12.8 15.3,23.6" fill="none" stroke="#4a5bab" stroke-width="4"/><polyline points="28.6,2 39.4,12.8 28.6,23.6" fill="none" stroke="#4a5bab" stroke-width="4"/></svg>
<div style="position:absolute;left:0px;top:782px;width:2868px;height:140px;background:#f9f8f6"></div>
<div style="position:absolute;left:16px;top:834px;width:36px;height:36px;border:2px solid #dedbd2;border-radius:8px;box-sizing:border-box;background:#fdfcfa"></div>
<div style="position:absolute;left:95.5px;top:839.2px;font-family:'Liberation Mono', monospace;font-size:28px;line-height:28px;font-weight:400;color:#64615a;letter-spacing:0px;white-space:nowrap;transform:scale(1.025,1.12);transform-origin:0 21.3px">119<span style="display:inline-block;width:0.6em;text-align:center;font-family:'Liberation Sans';transform:scale(0.95,0.93);transform-origin:50% 80%">0</span>8282</div>
<div style="position:absolute;left:354px;top:830.5px;width:148.89999999999998px;height:43.5px;background:#f7d6f0;border:2px solid #f7d6f0;border-radius:22px;box-sizing:border-box"></div>
<div style="position:absolute;left:375.8px;top:841.1px;font-family:'Liberation Sans', sans-serif;font-size:24px;line-height:24px;font-weight:700;color:#b05da6;letter-spacing:-0.6px;white-space:nowrap;">In Review</div>
<svg style="position:absolute;left:776px;top:802px;" width="136" height="100" viewBox="0 0 136 100"><defs><clipPath id="p3c"><rect width="136" height="100" rx="8"/></clipPath><filter id="p3b" x="-20%" y="-20%" width="140%" height="140%"><feGaussianBlur stdDeviation="3"/></filter><filter id="p3s" x="-20%" y="-20%" width="140%" height="140%"><feGaussianBlur stdDeviation="0.8"/></filter><linearGradient id="p3g" x1="0" y1="0" x2="0" y2="1"><stop offset="0" stop-color="#7ab84a"/><stop offset="1" stop-color="#569a30"/></linearGradient></defs><g clip-path="url(#p3c)"><rect width="136" height="100" fill="url(#p3g)"/><g filter="url(#p3b)"><ellipse cx="110" cy="15" rx="40" ry="18" fill="#84be52"/><ellipse cx="100" cy="80" rx="40" ry="20" fill="#5ea034"/><ellipse cx="50" cy="85" rx="30" ry="12" fill="#4b8a2c"/></g><g filter="url(#p3s)"><ellipse cx="44" cy="50" rx="27" ry="32" fill="#aaa4a0"/><ellipse cx="36" cy="36" rx="14" ry="12" fill="#c6c0bc"/><ellipse cx="50" cy="72" rx="14" ry="9" fill="#4d4038"/><ellipse cx="59" cy="50" rx="18" ry="21" fill="#e9e3d8"/><ellipse cx="47" cy="37" rx="5" ry="4" transform="rotate(30 47 37)" fill="#3a3430"/><ellipse cx="77" cy="35" rx="4" ry="3.5" fill="#3a3430"/><circle cx="62" cy="53" r="2" fill="#1a1a1a"/><circle cx="72" cy="51" r="1.8" fill="#1a1a1a"/><circle cx="70" cy="63" r="2.5" fill="#e6b0b8"/></g></g></svg>
<div style="position:absolute;left:1043.9px;top:838.3px;width:100px;text-align:center;font-family:'Liberation Sans', sans-serif;font-size:28.5px;line-height:28.5px;font-weight:400;color:#64615a;letter-spacing:0px;white-space:nowrap;transform:scaleX(1.12);transform-origin:50px 0">2</div>
<div style="position:absolute;left:1203.8px;top:838.3px;width:100px;text-align:center;font-family:'Liberation Sans', sans-serif;font-size:28.5px;line-height:28.5px;font-weight:400;color:#64615a;letter-spacing:0px;white-space:nowrap;transform:scaleX(1.12);transform-origin:50px 0">0</div>
<div style="position:absolute;left:1363.8px;top:838.3px;width:100px;text-align:center;font-family:'Liberation Sans', sans-serif;font-size:28.5px;line-height:28.5px;font-weight:400;color:#64615a;letter-spacing:0px;white-space:nowrap;transform:scaleX(1.12);transform-origin:50px 0">0</div>
<svg style="position:absolute;left:1514px;top:824px;" width="56" height="56" viewBox="0 0 56 56"><defs><clipPath id="a3_0c"><circle cx="28" cy="28" r="26.5"/></clipPath><filter id="a3_0b"><feGaussianBlur stdDeviation="1.2"/></filter></defs><g clip-path="url(#a3_0c)"><rect width="56" height="56" fill="#3e3530"/><g filter="url(#a3_0b)"><rect x="34" y="0" width="22" height="56" fill="#8e8458"/><ellipse cx="47" cy="30" rx="9" ry="13" fill="#b88a48"/><rect x="8" y="42" width="48" height="14" fill="#9a9676"/><ellipse cx="27" cy="12" rx="15" ry="9" fill="#7a7672"/><ellipse cx="26" cy="28" rx="15" ry="17" fill="#ddd8d2"/><ellipse cx="24" cy="22" rx="9" ry="9" fill="#f0ede8"/><circle cx="13" cy="19" r="6" fill="#141212"/><circle cx="39" cy="14" r="7" fill="#141212"/><circle cx="20" cy="30" r="2" fill="#000"/><circle cx="32" cy="29" r="2" fill="#000"/><circle cx="26" cy="41" r="3.2" fill="#e07078"/><rect x="12" y="44" width="9" height="10" fill="#241e1c"/><rect x="34" y="42" width="9" height="10" fill="#241e1c"/></g></g><circle cx="28" cy="28" r="26.6" fill="none" stroke="#b88aa6" stroke-width="2.6"/></svg>
<svg style="position:absolute;left:1578px;top:824px;" width="56" height="56" viewBox="0 0 56 56"><defs><clipPath id="a3_1c"><circle cx="28" cy="28" r="26.5"/></clipPath><filter id="a3_1b"><feGaussianBlur stdDeviation="1.2"/></filter></defs><g clip-path="url(#a3_1c)"><rect width="56" height="56" fill="#4e4038"/><g filter="url(#a3_1b)"><rect x="32" y="0" width="24" height="32" fill="#84786c"/><rect x="0" y="40" width="56" height="16" fill="#a48a68"/><ellipse cx="28" cy="38" rx="13" ry="12" fill="#2e2420"/><ellipse cx="29" cy="25" rx="12" ry="12" fill="#ebe8e6"/><circle cx="17" cy="17" r="3.5" fill="#151212"/><circle cx="41" cy="17" r="3.5" fill="#151212"/><circle cx="23" cy="23" r="1.7" fill="#000"/><circle cx="33" cy="23" r="1.7" fill="#000"/><circle cx="29" cy="33" r="3" fill="#d07a80"/></g></g><circle cx="28" cy="28" r="26.6" fill="none" stroke="#b88aa6" stroke-width="2.6"/></svg>
<div style="position:absolute;left:1608px;top:854px;width:28px;height:28px;background:#fdfcfa;border-radius:8px"></div>
<svg style="position:absolute;left:1612px;top:858px;" width="20" height="20" viewBox="0 0 20 20"><rect width="20" height="20" rx="4.5" fill="#55b5a6"/><polyline points="4.8,10.2 8.6,13.8 15.4,6.6" fill="none" stroke="#fff" stroke-width="3.2" stroke-linecap="round" stroke-linejoin="round"/></svg>
<div style="position:absolute;left:1854.4px;top:837.0px;font-family:'Liberation Sans', sans-serif;font-size:30px;line-height:30px;font-weight:400;color:#b8733e;letter-spacing:-0.95px;white-space:nowrap;">63.47%</div>
<svg style="position:absolute;left:2114px;top:824px;" width="56" height="56" viewBox="0 0 56 56"><defs><clipPath id="ar3c"><circle cx="28" cy="28" r="26.5"/></clipPath><filter id="ar3b"><feGaussianBlur stdDeviation="1.2"/></filter></defs><g clip-path="url(#ar3c)"><rect width="56" height="56" fill="#6c6a66"/><g filter="url(#ar3b)"><rect x="0" y="34" width="56" height="22" fill="#8e7456"/><ellipse cx="10" cy="20" rx="6" ry="8" fill="#5a8a40"/><ellipse cx="48" cy="44" rx="9" ry="7" fill="#4e6a3a"/><ellipse cx="22" cy="20" rx="12" ry="14" fill="#8a8884"/><ellipse cx="34" cy="24" rx="20" ry="19" fill="#e2dbd0"/><circle cx="22" cy="8" r="4" fill="#161414"/><circle cx="30" cy="11" r="2.5" fill="#161414"/><circle cx="46" cy="20" r="3" fill="#161414"/><ellipse cx="34" cy="25" rx="9" ry="8" fill="#e38e9c"/><rect x="18" y="36" width="7" height="14" fill="#3a3634"/></g></g><circle cx="28" cy="28" r="26.6" fill="none" stroke="#8db8b4" stroke-width="2.6"/></svg>
<div style="position:absolute;left:2463.8px;top:838.3px;width:100px;text-align:center;font-family:'Liberation Sans', sans-serif;font-size:28.5px;line-height:28.5px;font-weight:400;color:#64615a;letter-spacing:0px;white-space:nowrap;transform:scaleX(1.12);transform-origin:50px 0">1</div>
<div style="position:absolute;left:2624.0px;top:838.3px;width:100px;text-align:center;font-family:'Liberation Sans', sans-serif;font-size:28.5px;line-height:28.5px;font-weight:400;color:#64615a;letter-spacing:0px;white-space:nowrap;transform:scaleX(1.12);transform-origin:50px 0">0</div>
<svg style="position:absolute;left:2776px;top:839px;" width="44" height="26" viewBox="0 0 44 26"><polyline points="15.3,2 4.5,12.8 15.3,23.6" fill="none" stroke="#4a5bab" stroke-width="4"/><polyline points="28.6,2 39.4,12.8 28.6,23.6" fill="none" stroke="#4a5bab" stroke-width="4"/></svg>
<div style="position:absolute;left:0px;top:922px;width:2868px;height:140px;background:#fdfcfa"></div>
<div style="position:absolute;left:16px;top:974px;width:36px;height:36px;border:2px solid #dedbd2;border-radius:8px;box-sizing:border-box;background:#fdfcfa"></div>
<div style="position:absolute;left:95.5px;top:979.2px;font-family:'Liberation Mono', monospace;font-size:28px;line-height:28px;font-weight:400;color:#64615a;letter-spacing:0px;white-space:nowrap;transform:scale(1.025,1.12);transform-origin:0 21.3px">119<span style="display:inline-block;width:0.6em;text-align:center;font-family:'Liberation Sans';transform:scale(0.95,0.93);transform-origin:50% 80%">0</span>8283</div>
<div style="position:absolute;left:354px;top:970.5px;width:100.60000000000002px;height:43.5px;background:#d6efe9;border:2px solid #a8dccf;border-radius:22px;box-sizing:border-box"></div>
<div style="position:absolute;left:375.8px;top:981.1px;font-family:'Liberation Sans', sans-serif;font-size:24px;line-height:24px;font-weight:700;color:#1f5f58;letter-spacing:-0.6px;white-space:nowrap;">Done</div>
<svg style="position:absolute;left:769px;top:942px;" width="150" height="100" viewBox="0 0 150 100"><defs><clipPath id="p4c"><rect width="150" height="100" rx="8"/></clipPath><filter id="p4b" x="-20%" y="-20%" width="140%" height="140%"><feGaussianBlur stdDeviation="3"/></filter><filter id="p4s" x="-20%" y="-20%" width="140%" height="140%"><feGaussianBlur stdDeviation="0.8"/></filter><radialGradient id="p4g" cx="0.5" cy="0.55" r="0.7"><stop offset="0.6" stop-color="#eceaec"/><stop offset="1" stop-color="#b8b6ba"/></radialGradient></defs><g clip-path="url(#p4c)"><rect width="150" height="100" fill="url(#p4g)"/><g filter="url(#p4b)"><ellipse cx="30" cy="30" rx="15" ry="6" fill="#d4d3d8"/><ellipse cx="135" cy="88" rx="10" ry="6" fill="#c8c8cc"/><ellipse cx="70" cy="92" rx="30" ry="5" fill="#dcdbe0"/><rect x="0" y="0" width="12" height="5" fill="#222"/><rect x="130" y="0" width="20" height="4" fill="#444"/></g><path d="M8 42 Q14 53 38 52" fill="none" stroke="#c4a48e" stroke-width="3"/><g filter="url(#p4s)"><rect x="58" y="62" width="11" height="22" fill="#1e1c1c"/><rect x="77" y="64" width="11" height="21" fill="#1e1c1c"/><rect x="93" y="62" width="9" height="18" fill="#1e1c1c"/><ellipse cx="70" cy="44" rx="36" ry="27" fill="#9b938b"/><ellipse cx="97" cy="43" rx="17" ry="21" fill="#e6dccd"/><circle cx="84" cy="27" r="4.5" fill="#1c1a1a"/><circle cx="110" cy="28" r="4.5" fill="#1c1a1a"/><circle cx="91" cy="40" r="2" fill="#111"/><circle cx="102" cy="40" r="2" fill="#111"/><ellipse cx="96" cy="51" rx="3.2" ry="2.8" fill="#e77a90"/><g fill="#e24a5a"><ellipse cx="63" cy="85" rx="6" ry="2"/><ellipse cx="83" cy="86" rx="6" ry="2"/><ellipse cx="98" cy="81" rx="5" ry="2"/></g></g></g></svg>
<div style="position:absolute;left:1043.9px;top:978.3px;width:100px;text-align:center;font-family:'Liberation Sans', sans-serif;font-size:28.5px;line-height:28.5px;font-weight:400;color:#64615a;letter-spacing:0px;white-space:nowrap;transform:scaleX(1.12);transform-origin:50px 0">2</div>
<div style="position:absolute;left:1203.8px;top:978.3px;width:100px;text-align:center;font-family:'Liberation Sans', sans-serif;font-size:28.5px;line-height:28.5px;font-weight:400;color:#64615a;letter-spacing:0px;white-space:nowrap;transform:scaleX(1.12);transform-origin:50px 0">0</div>
<div style="position:absolute;left:1363.8px;top:978.3px;width:100px;text-align:center;font-family:'Liberation Sans', sans-serif;font-size:28.5px;line-height:28.5px;font-weight:400;color:#64615a;letter-spacing:0px;white-space:nowrap;transform:scaleX(1.12);transform-origin:50px 0">0</div>
<svg style="position:absolute;left:1514px;top:964px;" width="56" height="56" viewBox="0 0 56 56"><defs><clipPath id="a4_0c"><circle cx="28" cy="28" r="26.5"/></clipPath><filter id="a4_0b"><feGaussianBlur stdDeviation="1.2"/></filter></defs><g clip-path="url(#a4_0c)"><rect width="56" height="56" fill="#3e3530"/><g filter="url(#a4_0b)"><rect x="34" y="0" width="22" height="56" fill="#8e8458"/><ellipse cx="47" cy="30" rx="9" ry="13" fill="#b88a48"/><rect x="8" y="42" width="48" height="14" fill="#9a9676"/><ellipse cx="27" cy="12" rx="15" ry="9" fill="#7a7672"/><ellipse cx="26" cy="28" rx="15" ry="17" fill="#ddd8d2"/><ellipse cx="24" cy="22" rx="9" ry="9" fill="#f0ede8"/><circle cx="13" cy="19" r="6" fill="#141212"/><circle cx="39" cy="14" r="7" fill="#141212"/><circle cx="20" cy="30" r="2" fill="#000"/><circle cx="32" cy="29" r="2" fill="#000"/><circle cx="26" cy="41" r="3.2" fill="#e07078"/><rect x="12" y="44" width="9" height="10" fill="#241e1c"/><rect x="34" y="42" width="9" height="10" fill="#241e1c"/></g></g><circle cx="28" cy="28" r="26.6" fill="none" stroke="#b88aa6" stroke-width="2.6"/></svg>
<div style="position:absolute;left:1544px;top:994px;width:28px;height:28px;background:#fdfcfa;border-radius:8px"></div>
<svg style="position:absolute;left:1548px;top:998px;" width="20" height="20" viewBox="0 0 20 20"><rect width="20" height="20" rx="4.5" fill="#55b5a6"/><polyline points="4.8,10.2 8.6,13.8 15.4,6.6" fill="none" stroke="#fff" stroke-width="3.2" stroke-linecap="round" stroke-linejoin="round"/></svg>
<svg style="position:absolute;left:1578px;top:964px;" width="56" height="56" viewBox="0 0 56 56"><defs><clipPath id="a4_1c"><circle cx="28" cy="28" r="26.5"/></clipPath><filter id="a4_1b"><feGaussianBlur stdDeviation="1.2"/></filter></defs><g clip-path="url(#a4_1c)"><rect width="56" height="56" fill="#4e4038"/><g filter="url(#a4_1b)"><rect x="32" y="0" width="24" height="32" fill="#84786c"/><rect x="0" y="40" width="56" height="16" fill="#a48a68"/><ellipse cx="28" cy="38" rx="13" ry="12" fill="#2e2420"/><ellipse cx="29" cy="25" rx="12" ry="12" fill="#ebe8e6"/><circle cx="17" cy="17" r="3.5" fill="#151212"/><circle cx="41" cy="17" r="3.5" fill="#151212"/><circle cx="23" cy="23" r="1.7" fill="#000"/><circle cx="33" cy="23" r="1.7" fill="#000"/><circle cx="29" cy="33" r="3" fill="#d07a80"/></g></g><circle cx="28" cy="28" r="26.6" fill="none" stroke="#b88aa6" stroke-width="2.6"/></svg>
<div style="position:absolute;left:1608px;top:994px;width:28px;height:28px;background:#fdfcfa;border-radius:8px"></div>
<svg style="position:absolute;left:1612px;top:998px;" width="20" height="20" viewBox="0 0 20 20"><rect width="20" height="20" rx="4.5" fill="#55b5a6"/><polyline points="4.8,10.2 8.6,13.8 15.4,6.6" fill="none" stroke="#fff" stroke-width="3.2" stroke-linecap="round" stroke-linejoin="round"/></svg>
<div style="position:absolute;left:1854.4px;top:977.0px;font-family:'Liberation Sans', sans-serif;font-size:30px;line-height:30px;font-weight:400;color:#1f6660;letter-spacing:-0.95px;white-space:nowrap;">89.19%</div>
<svg style="position:absolute;left:2114px;top:964px;" width="56" height="56" viewBox="0 0 56 56"><defs><clipPath id="ar4c"><circle cx="28" cy="28" r="26.5"/></clipPath><filter id="ar4b"><feGaussianBlur stdDeviation="1.2"/></filter></defs><g clip-path="url(#ar4c)"><rect width="56" height="56" fill="#6c6a66"/><g filter="url(#ar4b)"><rect x="0" y="34" width="56" height="22" fill="#8e7456"/><ellipse cx="10" cy="20" rx="6" ry="8" fill="#5a8a40"/><ellipse cx="48" cy="44" rx="9" ry="7" fill="#4e6a3a"/><ellipse cx="22" cy="20" rx="12" ry="14" fill="#8a8884"/><ellipse cx="34" cy="24" rx="20" ry="19" fill="#e2dbd0"/><circle cx="22" cy="8" r="4" fill="#161414"/><circle cx="30" cy="11" r="2.5" fill="#161414"/><circle cx="46" cy="20" r="3" fill="#161414"/><ellipse cx="34" cy="25" rx="9" ry="8" fill="#e38e9c"/><rect x="18" y="36" width="7" height="14" fill="#3a3634"/></g></g><circle cx="28" cy="28" r="26.6" fill="none" stroke="#8db8b4" stroke-width="2.6"/></svg>
<div style="position:absolute;left:2463.8px;top:978.3px;width:100px;text-align:center;font-family:'Liberation Sans', sans-serif;font-size:28.5px;line-height:28.5px;font-weight:400;color:#64615a;letter-spacing:0px;white-space:nowrap;transform:scaleX(1.12);transform-origin:50px 0">2</div>
<div style="position:absolute;left:2624.0px;top:978.3px;width:100px;text-align:center;font-family:'Liberation Sans', sans-serif;font-size:28.5px;line-height:28.5px;font-weight:400;color:#64615a;letter-spacing:0px;white-space:nowrap;transform:scaleX(1.12);transform-origin:50px 0">0</div>
<svg style="position:absolute;left:2776px;top:979px;" width="44" height="26" viewBox="0 0 44 26"><polyline points="15.3,2 4.5,12.8 15.3,23.6" fill="none" stroke="#4a5bab" stroke-width="4"/><polyline points="28.6,2 39.4,12.8 28.6,23.6" fill="none" stroke="#4a5bab" stroke-width="4"/></svg>
</body></html>
